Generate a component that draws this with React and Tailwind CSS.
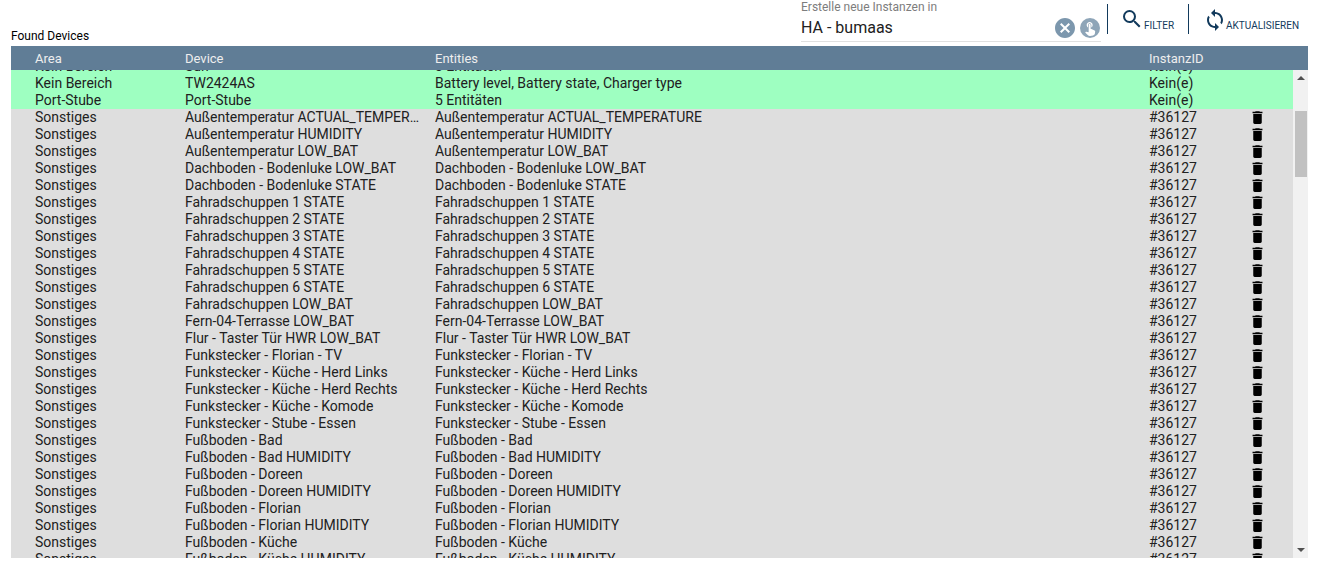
import React from 'react';
import { MdSearch, MdSync, MdDelete, MdCancel, MdTouchApp } from 'react-icons/md';

const names = [
  'Außentemperatur ACTUAL_TEMPERATURE',
  'Außentemperatur HUMIDITY',
  'Außentemperatur LOW_BAT',
  'Dachboden - Bodenluke LOW_BAT',
  'Dachboden - Bodenluke STATE',
  'Fahradschuppen 1 STATE',
  'Fahradschuppen 2 STATE',
  'Fahradschuppen 3 STATE',
  'Fahradschuppen 4 STATE',
  'Fahradschuppen 5 STATE',
  'Fahradschuppen 6 STATE',
  'Fahradschuppen LOW_BAT',
  'Fern-04-Terrasse LOW_BAT',
  'Flur - Taster Tür HWR LOW_BAT',
  'Funkstecker - Florian - TV',
  'Funkstecker - Küche - Herd Links',
  'Funkstecker - Küche - Herd Rechts',
  'Funkstecker - Küche - Komode',
  'Funkstecker - Stube - Essen',
  'Fußboden - Bad',
  'Fußboden - Bad HUMIDITY',
  'Fußboden - Doreen',
  'Fußboden - Doreen HUMIDITY',
  'Fußboden - Florian',
  'Fußboden - Florian HUMIDITY',
  'Fußboden - Küche',
  'Fußboden - Küche HUMIDITY',
];

const newRows = [
  { area: 'Kein Bereich', device: 'Sun', entities: '3 Entitäten' },
  { area: 'Kein Bereich', device: 'TW2424AS', entities: 'Battery level, Battery state, Charger type' },
  { area: 'Port-Stube', device: 'Port-Stube', entities: '5 Entitäten' },
];

const Row = ({ area, device, entities, id, isNew }) => (
  <div className={`flex h-[17px] leading-[17px] ${isNew ? 'bg-[#9effc1]' : 'bg-[#dedede]'}`}>
    <div className="w-[174px] pl-6 truncate">{area}</div>
    <div className="w-[250px] pr-4 truncate">{device}</div>
    <div className="w-[714px] truncate">{entities}</div>
    <div className="w-[100px] truncate">{id}</div>
    {!isNew && <MdDelete className="text-black" size={17} />}
  </div>
);

export default function App() {
  return (
    <div className="h-[566px] w-[1322px] overflow-hidden bg-white pl-[11px] pr-[14px] font-['Roboto',sans-serif] text-[#212121]">
      {/* Top bar */}
      <div className="flex h-[46px]">
        <div className="flex-1 pt-[29px] text-xs leading-[14px] text-black">Found Devices</div>
        <div className="mr-[6px] h-[42px] w-[300px] border-b border-[#e0e0e0]">
          <div className="text-xs leading-[14px] text-[#7d7d7d]">Erstelle neue Instanzen in</div>
          <div className="flex h-[27px] items-center">
            <div className="flex-1 text-base leading-5">HA - bumaas</div>
            <MdCancel className="mt-[1px] text-[#7c97ad]" size={24} />
            <MdTouchApp className="ml-[3px] mr-px mt-[1px] rounded-full bg-[#8ea5b8] p-[2px] text-white" size={20} />
          </div>
        </div>
        <div className="mt-1 h-[30px] w-px bg-[#123a5c]" />
        <div className="flex h-[31px] w-[80px] items-end pl-[12px] text-[#123a5c]">
          <MdSearch size={24} />
          <span className="mb-[-1px] text-[10px] leading-[12px]">FILTER</span>
        </div>
        <div className="mt-1 h-[30px] w-px bg-[#123a5c]" />
        <div className="flex h-[32px] w-[119px] items-end pl-[14px] text-[#123a5c]">
          <MdSync size={24} />
          <span className="mb-0 ml-[-1px] text-[10px] leading-[12px] whitespace-nowrap">AKTUALISIEREN</span>
        </div>
      </div>

      {/* Table header */}
      <div className="flex h-6 items-center bg-[#607d96] pt-[1px] text-[13px] text-[#eeeeee]">
        <div className="w-[174px] pl-6">Area</div>
        <div className="w-[250px]">Device</div>
        <div className="w-[714px]">Entities</div>
        <div>InstanzID</div>
      </div>

      {/* Table body */}
      <div className="flex h-[488px] text-sm">
        <div className="flex-1 overflow-hidden">
          <div className="mt-[-12px]">
            {newRows.map((row) => (
              <Row key={row.device} {...row} id="Kein(e)" isNew />
            ))}
            {names.map((name) => (
              <Row key={name} area="Sonstiges" device={name} entities={name} id="#36127" />
            ))}
          </div>
        </div>
        <div className="flex w-[15px] flex-col items-center bg-[#f1f1f1]">
          <svg className="mt-[6px]" width="8" height="4" viewBox="0 0 8 4"><path d="M0 4L4 0L8 4Z" fill="#505050" /></svg>
          <div className="mt-[31px] h-[66px] w-[12px] bg-[#c1c1c1]" />
          <svg className="mt-auto mb-[6px]" width="8" height="4" viewBox="0 0 8 4"><path d="M0 0L8 0L4 4Z" fill="#505050" /></svg>
        </div>
      </div>
    </div>
  );
}
